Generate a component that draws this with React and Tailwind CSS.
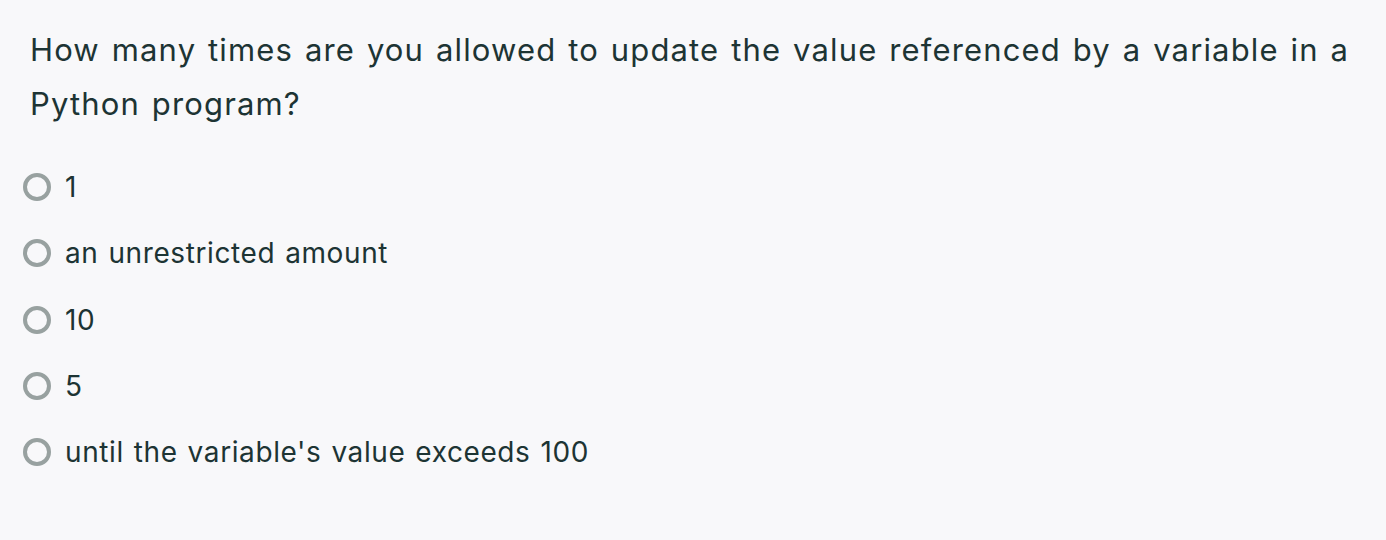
const options = ["1", "an unrestricted amount", "10", "5", "until the variable's value exceeds 100"];

export default function App() {
    return (
        <div className="min-h-[540px] w-full bg-[#f8f8fa] pl-[30px] pt-[23px] text-[#1d3434] font-['Inter',sans-serif]">
            {/* Question */}
            <p className="text-[31px] leading-[54px] tracking-[1.15px] [word-spacing:2px] max-w-[1340px]">
                How many times are you allowed to update the value referenced by a variable in a Python program?
            </p>

            {/* Answers */}
            <div className="mt-[42px] flex flex-col gap-[38.25px] -ml-[7px]">
                {options.map((opt, i) => (
                    <label key={i} className="flex items-center gap-[14px] h-[28px]">
                        <span className="w-[28px] h-[28px] rounded-full border-[4px] border-[#98a1a0] shrink-0" />
                        <span className="text-[28px] tracking-[0.6px] [word-spacing:1.5px]">{opt}</span>
                    </label>
                ))}
            </div>
        </div>
    );
}
